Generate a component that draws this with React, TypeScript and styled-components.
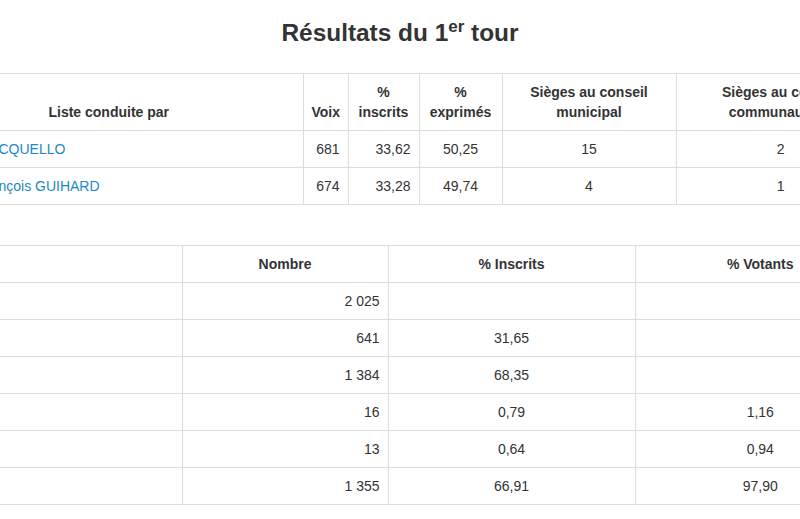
import React from 'react';
import styled, { createGlobalStyle } from 'styled-components';

const GlobalStyle = createGlobalStyle`
  html, body {
    margin: 0;
    padding: 0;
    background: #fff;
    overflow: hidden;
  }
  body {
    font-family: "Liberation Sans", Arial, Helvetica, sans-serif;
    color: #333;
    font-size: 14px;
    line-height: 20px;
  }
`;

const listes = [
  { nom: 'Christine JACQUELLO', voix: '681', inscrits: '33,62', exprimes: '50,25', conseil: '15', communaute: '2' },
  { nom: 'M. Jean-François GUIHARD', voix: '674', inscrits: '33,28', exprimes: '49,74', conseil: '4', communaute: '1' }
];

const participation = [
  { label: 'Inscrits', nombre: '2 025', inscrits: '', votants: '' },
  { label: 'Abstentions', nombre: '641', inscrits: '31,65', votants: '' },
  { label: 'Votants', nombre: '1 384', inscrits: '68,35', votants: '' },
  { label: 'Blancs', nombre: '16', inscrits: '0,79', votants: '1,16' },
  { label: 'Nuls', nombre: '13', inscrits: '0,64', votants: '0,94' },
  { label: 'Exprimés', nombre: '1 355', inscrits: '66,91', votants: '97,90' }
];

const App = () => {
  return (
    <Page>
      <GlobalStyle />
      <Container>
        <Title>
          Résultats du 1<sup>er</sup> tour
        </Title>
        <Table>
          <colgroup>
            <col style={{ width: 388 }} />
            <col style={{ width: 45 }} />
            <col style={{ width: 71 }} />
            <col style={{ width: 83 }} />
            <col style={{ width: 174 }} />
            <col style={{ width: 209 }} />
          </colgroup>
          <thead>
            <tr>
              <Th>Liste conduite par</Th>
              <Th>Voix</Th>
              <Th>% inscrits</Th>
              <Th>% exprimés</Th>
              <Th>Sièges au conseil municipal</Th>
              <Th>Sièges au conseil communautaire</Th>
            </tr>
          </thead>
          <tbody>
            {listes.map((l) => (
              <tr key={l.nom}>
                <Td $align="left">
                  <NameLink href="#">{l.nom}</NameLink>
                </Td>
                <Td $align="right">{l.voix}</Td>
                <Td $align="right">{l.inscrits}</Td>
                <Td>{l.exprimes}</Td>
                <Td>{l.conseil}</Td>
                <Td>{l.communaute}</Td>
              </tr>
            ))}
          </tbody>
        </Table>

        <Table $spaced>
          <colgroup>
            <col style={{ width: 267 }} />
            <col style={{ width: 206 }} />
            <col style={{ width: 247 }} />
            <col style={{ width: 250 }} />
          </colgroup>
          <thead>
            <tr>
              <Th></Th>
              <Th>Nombre</Th>
              <Th>% Inscrits</Th>
              <Th>% Votants</Th>
            </tr>
          </thead>
          <tbody>
            {participation.map((p) => (
              <tr key={p.label}>
                <Td $align="left">{p.label}</Td>
                <Td $align="right">{p.nombre}</Td>
                <Td>{p.inscrits}</Td>
                <Td>{p.votants}</Td>
              </tr>
            ))}
          </tbody>
        </Table>
      </Container>
    </Page>
  );
};

const Page = styled.div`
  width: 100%;
  display: flex;
  justify-content: center;
`;

const Container = styled.div`
  width: 970px;
  flex-shrink: 0;
  display: flex;
  flex-direction: column;
`;

const Title = styled.h1`
  margin: 18px 0 26px;
  font-size: 24.4px;
  line-height: 29px;
  font-weight: 700;
  text-align: center;
  color: #333;

  sup {
    font-size: 17px;
    line-height: 0;
    vertical-align: 9px;
  }
`;

const Table = styled.table<{ $spaced?: boolean }>`
  width: 970px;
  table-layout: fixed;
  border-collapse: collapse;
  border-top: 1px solid #ddd;
  margin-top: ${({ $spaced }) => ($spaced ? '40px' : '0')};
`;

const Th = styled.th`
  padding: 8px;
  font-weight: 700;
  text-align: center;
  vertical-align: bottom;
  border-bottom: 1px solid #ddd;
  border-left: 1px solid #ddd;
  color: #333;

  &:first-child {
    border-left: none;
  }
`;

const Td = styled.td<{ $align?: 'left' | 'right' | 'center' }>`
  padding: 8px;
  height: 20px;
  text-align: ${({ $align }) => $align || 'center'};
  vertical-align: top;
  border-bottom: 1px solid #ddd;
  border-left: 1px solid #ddd;
  white-space: nowrap;
  color: #333;

  &:first-child {
    border-left: none;
  }
`;

const NameLink = styled.a`
  color: #1d87c8;
  text-decoration: none;
`;

export default App;
